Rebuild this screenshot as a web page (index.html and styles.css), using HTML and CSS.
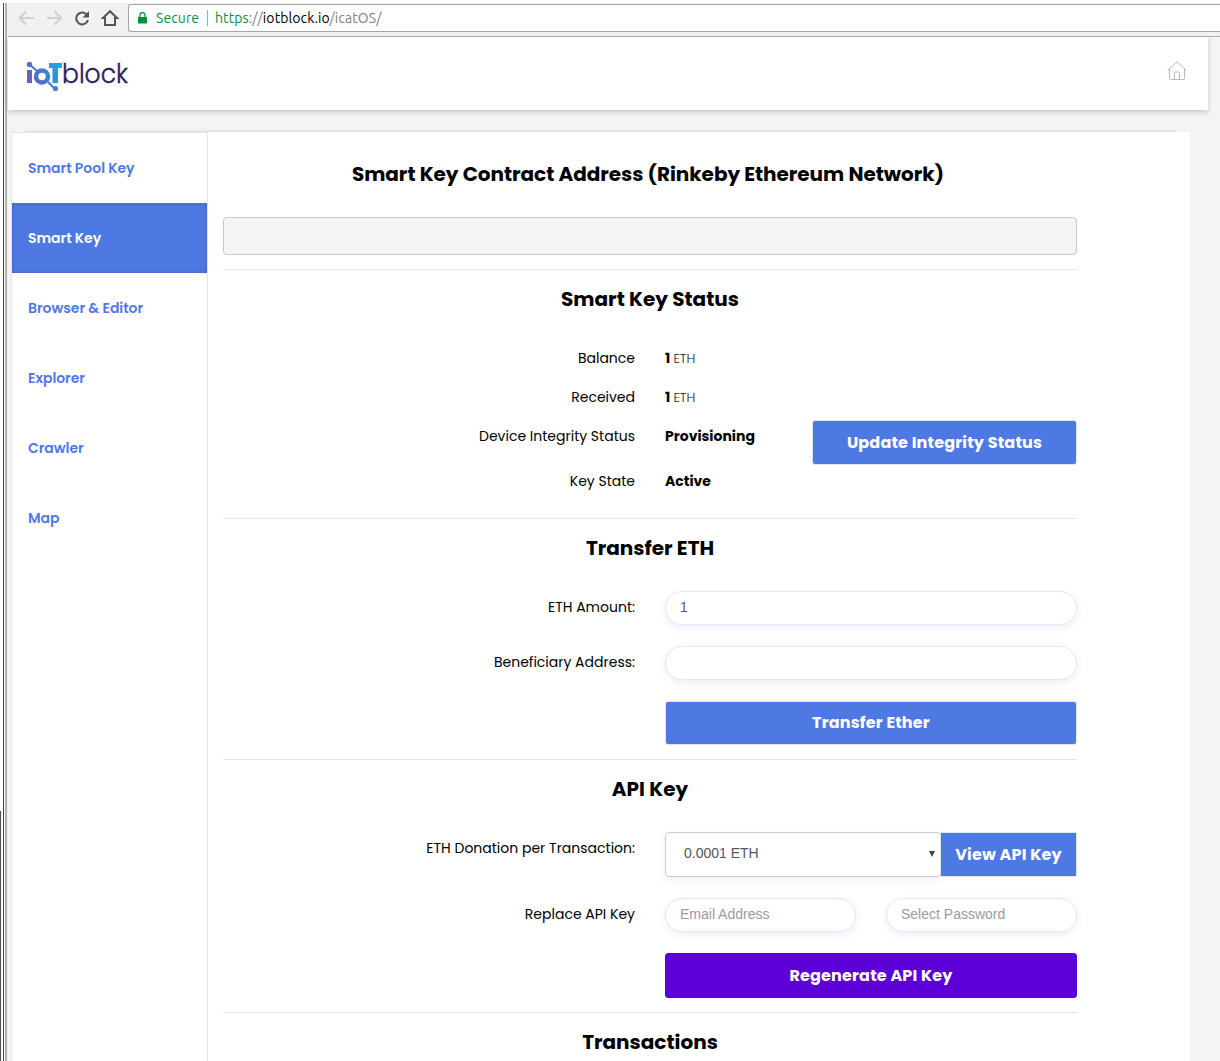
FILE: index.html
```html
<!DOCTYPE html>
<html lang="en">
<head>
<meta charset="utf-8">
<title>iotblock</title>
<link rel="stylesheet" href="styles.css">
</head>
<body>
<div class="window">
  <div class="window-edge"><i class="edge-upper"></i><i class="edge-lower"></i></div>
  <div class="viewport">
    <div class="toolbar">
      <svg class="nav-icons" width="112" height="30" viewBox="0 0 112 30" fill="none">
        <g stroke="#cfcfcf" stroke-width="2"><path d="M25.500 14H12M18 7.500 11.500 14 18 20.500"/><path d="M39 14h13.500M46.500 7.500 53 14l-6.500 6.500"/></g>
        <g transform="translate(0 -1)"><path d="M79.300 12.200A6 6 0 1 0 80 17" stroke="#555" stroke-width="2"/><path d="M81 8v6.500h-6.500z" fill="#555"/></g>
        <path d="M95 14 102 7.200l7 6.800h-2v7H97v-7z" stroke="#555" stroke-width="2"/>
      </svg>
      <div class="omnibox">
        <svg class="lock" width="9" height="12" viewBox="0 0 9 12"><path d="M0 5h9v6.500H0z" fill="#0b8f3c"/><path d="M2 5V3a2.500 2.500 0 0 1 5 0v2" fill="none" stroke="#0b8f3c" stroke-width="1.300"/></svg>
        <span class="secure">Secure</span>
        <span class="url"><span class="scheme">https</span><span class="dim">://</span>iotblock.io<span class="dim">/icatOS/</span></span>
      </div>
    </div>
    <header class="header">
      <svg class="logo" width="112" height="48" viewBox="0 -8 112 48">
        <defs><linearGradient id="brand" gradientUnits="userSpaceOnUse" x1="0" y1="27" x2="36" y2="3"><stop offset="0" stop-color="#7a4fb5"/><stop offset=".5" stop-color="#3f7fd0"/><stop offset="1" stop-color="#14b4ec"/></linearGradient></defs>
        <g fill="url(#brand)"><circle cx="3.500" cy="5.500" r="2.700"/><circle cx="29.500" cy="29.500" r="2.600"/><path d="M1 11h5v13H1zM23 4h13v5h-4v15h-5.500V9H23z"/></g>
        <g fill="none" stroke="url(#brand)"><path d="m3 5 8 7m11 11 7 7" stroke-width="2"/><circle cx="16" cy="17.500" r="6" stroke-width="4.500"/></g>
        <text class="logo-word" x="36" y="24" textLength="66" lengthAdjust="spacingAndGlyphs">block</text>
      </svg>
      <svg class="home" width="20" height="20" viewBox="0 0 20 20" fill="none" stroke="#bbb"><path d="M.5 9.500 10 .8l9.500 8.700M2.500 8v9.500q0 1 1 1h13q1 0 1-1V8M7.500 18v-6q0-1 1-1h3q1 0 1 1v6"/></svg>
    </header>
    <div class="page-edge"></div>
    <div class="page">
      <nav class="sidebar">
        <a class="nav-item">Smart Pool Key</a>
        <a class="nav-item active">Smart Key</a>
        <a class="nav-item">Browser &amp; Editor</a>
        <a class="nav-item">Explorer</a>
        <a class="nav-item">Crawler</a>
        <a class="nav-item">Map</a>
      </nav>
      <main class="content">
        <section class="section address">
          <h2 class="title title-long">Smart Key Contract Address (Rinkeby Ethereum Network)</h2>
          <div class="address-box"></div>
        </section>
        <section class="section status">
          <h2 class="title">Smart Key Status</h2>
          <div class="row row-short"><span class="label">Balance</span><span class="value"><b>1</b> <span class="unit">ETH</span></span></div>
          <div class="row row-short"><span class="label">Received</span><span class="value"><b>1</b> <span class="unit">ETH</span></span></div>
          <div class="row row-integrity"><span class="label">Device Integrity Status</span><span class="value"><b>Provisioning</b></span><button class="button update">Update Integrity Status</button></div>
          <div class="row"><span class="label">Key State</span><span class="value"><b>Active</b></span></div>
        </section>
        <section class="section transfer">
          <h2 class="title">Transfer ETH</h2>
          <div class="row row-field"><span class="label">ETH Amount:</span><div class="pill filled">1</div></div>
          <div class="row row-field"><span class="label">Beneficiary Address:</span><div class="pill"></div></div>
          <div class="row row-action"><button class="button send">Transfer Ether</button></div>
        </section>
        <section class="section api">
          <h2 class="title">API Key</h2>
          <div class="row row-select"><span class="label">ETH Donation per Transaction:</span><div class="select"><span>0.0001 ETH</span><i class="arrow"></i></div><button class="button view">View API Key</button></div>
          <div class="row row-field"><span class="label">Replace API Key</span><div class="pair"><div class="pill">Email Address</div><div class="pill">Select Password</div></div></div>
          <div class="row row-action"><button class="button purple">Regenerate API Key</button></div>
        </section>
        <section class="section last"><h2 class="title">Transactions</h2></section>
      </main>
    </div>
  </div>
</div>
</body>
</html>
```
FILE: styles.css
```css
* { box-sizing: border-box; }
body { margin: 0; background: #fff; color: #000; font-family: Poppins, Inter, sans-serif; font-size: 14px; }
.window { display: flex; height: 1061px; overflow: hidden; padding-top: 3px; }
.window-edge { width: 8px; flex: none; background: linear-gradient(90deg, #fff 3px, #4a4744 3px 4px, #f4f4f4 4px 5px, #b3b3b3 5px 7px, #f2f2f2 7px); display: flex; flex-direction: column; }
.edge-upper { height: 808px; }
.edge-lower { width: 3px; flex: 1; background: linear-gradient(90deg, #544e49 1px, #fff 1px); }
.viewport { flex: 1; background: #f4f4f4; min-width: 0; }
.toolbar { height: 34px; border-bottom: 1px solid #b0b0b0; background: #f1f1f1; display: flex; }
.nav-icons { margin: 1px 8px 0 0; flex: none; }
.omnibox { margin-top: 1px; flex: 1; height: 28px; border: 1px solid #a5a5a5; border-right: 0; border-radius: 3px 0 0 3px; background: #fff; display: flex; align-items: center; padding-left: 9px; font: 14px/26px Ubuntu, "Noto Sans", sans-serif; }
.lock { margin-right: 9px; }
.secure { color: #0b8f3c; width: 52px; height: 16px; line-height: 16px; border-right: 1px solid #aaa; margin-right: 7px; letter-spacing: .1px; }
.url { letter-spacing: .1px; }
.scheme { color: #0b8f3c; }
.dim { color: #808080; }
.header { width: 1200px; height: 73px; background: #fff; box-shadow: 0 2px 5px rgba(0,0,0,.2); display: flex; justify-content: space-between; padding: 24px 21px 0 18px; }
.logo { margin-top: -10px; }
.logo-word { font: 300 27px Poppins, Inter, sans-serif; fill: #2b2058; stroke: #2b2058; stroke-width: .4px; }
.page-edge { height: 22px; margin: 0 44px 0 17px; background: linear-gradient(0deg, #dedede, #f0f0f0 2px, transparent 4px); }
.header + .page-edge { clip-path: inset(18px 0 0 0); }
.page { margin-left: 3px; width: 1179px; height: 929px; background: #fff; display: flex; }
.sidebar { width: 197px; border: 1px solid #e4e4e4; border-bottom: 0; }
.nav-item { display: flex; align-items: center; height: 70px; padding-left: 16px; color: #4f79e2; font-weight: 600; letter-spacing: -.04px; }
.nav-item.active { background: #4f79e2; color: #fff; box-shadow: inset 0 0 4px rgba(0,0,0,.2); }
.content { width: 869px; padding-left: 15px; }
.section { border-bottom: 1px solid #e4e4e4; width: 854px; }
.title { margin: 0; font-size: 20px; line-height: 30px; font-weight: 700; text-align: center; white-space: nowrap; }
.title-long { padding-right: 4px; letter-spacing: -.04px; }
.address { height: 138px; padding-top: 27px; }
.address-box { margin-top: 28px; height: 38px; border: 1px solid #c8c8c8; border-radius: 4px; background: #f4f4f4; }
.status { height: 249px; padding-top: 14px; }
.transfer { height: 241px; padding-top: 14px; }
.api { height: 253px; padding-top: 14px; }
.last { border: 0; padding-top: 14px; }
.row { display: flex; height: 45px; line-height: 22px; }
.label { width: 412px; margin-right: 30px; text-align: right; flex: none; white-space: nowrap; }
.value { flex: 1; }
b { font-weight: 700; }
.unit { font-weight: 300; font-size: 13px; color: #222; letter-spacing: -.2px; margin-left: -.5px; }
.row-short { height: 39px; }
.title + .row { margin-top: 33px; }
.button { border: 1px solid #e2e4f2; border-radius: 3px; background: #4f79e2; color: #fff; height: 44px; padding: 0; font: 700 16px Poppins, Inter, sans-serif; letter-spacing: .17px; flex: 1; white-space: nowrap; }
.update { flex: none; width: 265px; height: 45px; margin-top: -5px; padding-bottom: 1px; }
.send { padding-bottom: 2px; }
.pill { flex: 1; height: 34px; border: 1px solid #e8e6f3; border-radius: 17px; box-shadow: 0 3px 9px rgba(90,60,170,.09); padding-left: 14px; font: 14px/31px "Liberation Sans", Arial, sans-serif; color: #999aa4; background: #fff; }
.filled { color: #5c5c66; }
.row-field { height: 55px; }
.title + .row-field { margin-top: 28px; }
.row-field .label { padding-top: 5px; }
.row-action { padding-left: 442px; height: 45px; }
.title + .row-select { margin-top: 28px; }
.row-select { height: 66px; }
.row-select .label { padding-top: 5px; }
.select { width: 276px; height: 45px; border: 1px solid #ccc; border-radius: 4px; padding: 0 5px 3px 18px; display: flex; align-items: center; justify-content: space-between; color: #555560; font: 14px "Liberation Sans", Arial, sans-serif; box-shadow: 0 3px 9px rgba(90,60,170,.09); }
.arrow { border: 3px solid transparent; border-top: 6px solid #444; border-bottom: 0; margin-top: 2px; }
.view { height: 45px; border-radius: 0; margin-left: -1px; }
.pair { display: flex; gap: 30px; flex: 1; }
.purple { background: #5b00d6; border-color: #5b00d6; height: 45px; }
```
